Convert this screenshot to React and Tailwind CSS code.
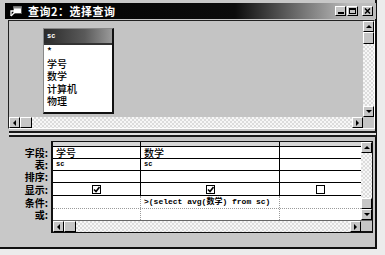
import React from 'react';

const checker = 'bg-[repeating-conic-gradient(#dcdcdc_0_25%,#f7f7f7_0_50%)] bg-[length:4px_4px]';
const raised = 'bg-[#c6c6c6] border-t border-l border-t-white border-l-white border-r border-b border-r-black border-b-black';
const cjk = "font-['Noto_Sans_CJK_SC','Noto_Sans',sans-serif]";
const mono = "font-['Liberation_Mono','Noto_Sans_CJK_SC',monospace]";

const Arrow = ({ dir }) => {
    const pts = {
        up: '1,5 4,2 7,5',
        down: '1,2 4,5 7,2',
        left: '5,1 2,4 5,7',
        right: '2,1 5,4 2,7',
    };
    return (
        <div className={`w-[11px] h-[11px] shrink-0 flex items-center justify-center ${raised}`}>
            <svg width="8" height="8" viewBox="0 0 8 8">
                <polygon points={pts[dir]} fill="#000" />
            </svg>
        </div>
    );
};

const VScroll = ({ thumbAtTop }) => (
    <div className="w-[11px] h-full flex flex-col">
        <Arrow dir="up" />
        {thumbAtTop && <div className={`h-[12px] shrink-0 ${raised}`} />}
        <div className={`flex-1 ${checker}`} />
        {!thumbAtTop && <div className={`h-[11px] shrink-0 ${raised}`} />}
        <Arrow dir="down" />
    </div>
);

const HScroll = () => (
    <div className="h-[11px] flex-1 flex">
        <Arrow dir="left" />
        <div className={`w-[12px] shrink-0 ${raised}`} />
        <div className={`flex-1 ${checker}`} />
        <Arrow dir="right" />
    </div>
);

const Check = ({ on }) => (
    <div className="w-[9px] h-[9px] border border-black bg-white flex items-center justify-center">
        {on && (
            <svg width="7" height="7" viewBox="0 0 7 7">
                <polyline points="1,3.5 3,5.5 6.5,1" fill="none" stroke="#000" strokeWidth="1.6" />
            </svg>
        )}
    </div>
);

const colW = ['w-[88px]', 'w-[139px]', 'flex-1'];

const Row = ({ h, line, cells, dotted }) => (
    <div className={`flex bg-white ${h} ${line}`}>
        {cells.map((c, i) => (
            <div
                key={i}
                className={`${colW[i]} flex items-center ${
                    i < 2 ? (dotted ? 'border-r border-dotted border-r-[#9a9a9a]' : 'border-r border-r-black') : ''
                }`}
            >
                {c}
            </div>
        ))}
    </div>
);

const labels = [
    ['字段:', 'h-[12px]'],
    ['表:', 'h-[12px]'],
    ['排序:', 'h-[12px]'],
    ['显示:', 'h-[13px]'],
    ['条件:', 'h-[13px]'],
    ['或:', 'h-[11px]'],
];

export default function App() {
    return (
        <div className={`w-[385px] h-[255px] bg-[#ececec] overflow-hidden ${cjk}`}>
            <div className="w-[377px] h-[249px] bg-[#c8c8c8] border-r-2 border-b-2 border-[#111] pt-[3px] pl-[5px] flex flex-col">
                {/* title bar */}
                <div className="w-[371px] h-[16px] shrink-0 flex items-center pl-[5px] pr-[3px] bg-[linear-gradient(90deg,#000_0%,#0c0c0c_62%,#8a8a8a_84%,#bdbdbd_93%)]">
                    <svg width="12" height="11" viewBox="0 0 12 11" className="shrink-0">
                        <rect x="3.5" y="0.5" width="8" height="7" fill="#fff" stroke="#555" />
                        <rect x="3.5" y="0.5" width="8" height="2" fill="#888" />
                        <path d="M1 10 L1 5 L5 5" fill="none" stroke="#fff" strokeWidth="1.3" />
                        <path d="M1 10 L5 6" stroke="#fff" strokeWidth="1.3" />
                    </svg>
                    <span className="ml-[6px] text-[11px] leading-none font-bold text-white tracking-[0.5px]">
                        查询2：选择查询
                    </span>
                    <div className="ml-auto flex items-center gap-[1px]">
                        <div className={`w-[11px] h-[10px] flex items-end justify-center pb-[1px] ${raised}`}>
                            <div className="w-[6px] h-[2px] bg-black" />
                        </div>
                        <div className={`w-[11px] h-[10px] flex items-center justify-center mr-[3px] ${raised}`}>
                            <div className="w-[7px] h-[6px] border border-t-2 border-black" />
                        </div>
                        <div className={`w-[11px] h-[10px] flex items-center justify-center ${raised}`}>
                            <svg width="7" height="6" viewBox="0 0 7 6">
                                <path d="M1 0.5 L6 5.5 M6 0.5 L1 5.5" stroke="#000" strokeWidth="1.5" />
                            </svg>
                        </div>
                    </div>
                </div>

                {/* top pane */}
                <div className="mt-[1px] ml-[3px] w-[367px] h-[109px] shrink-0 border-t border-l border-[#222] border-r border-b border-r-white border-b-white flex flex-col">
                    <div className="flex h-[96px]">
                        <div className="flex-1 bg-[#c4c4c4] pl-[34px] pt-[7px]">
                            <div className="w-[71px] h-[86px] bg-white border-t border-l border-[#888] border-r-2 border-b-2 border-r-[#111] border-b-[#111] flex flex-col">
                                <div className="h-[14px] shrink-0 bg-[linear-gradient(90deg,#2a2a2a,#5a5a5a_60%,#9a9a9a)] flex items-center px-[3px]">
                                    <span className={`text-[7px] leading-none font-bold text-white ${mono}`}>sc</span>
                                </div>
                                <div className="flex-1 border-t-2 border-[#333] pl-[3px] text-[10px] leading-[12.5px] font-medium text-black">
                                    <div>*</div>
                                    <div>学号</div>
                                    <div>数学</div>
                                    <div>计算机</div>
                                    <div>物理</div>
                                </div>
                            </div>
                        </div>
                        <VScroll thumbAtTop />
                    </div>
                    <div className="flex h-[11px]">
                        <HScroll />
                        <div className="w-[11px] bg-[#c6c6c6]" />
                    </div>
                </div>

                {/* splitter */}
                <div className="mt-[2px] ml-[4px] w-[367px] h-[6px] shrink-0 border-y-2 border-[#1a1a1a] bg-[#e2e2e2]" />

                {/* bottom pane */}
                <div className="mt-[4px] flex">
                    <div className="w-[46px] shrink-0 flex flex-col pt-[6px] pr-[3px] text-right text-[10px] leading-none font-bold text-black">
                        {labels.map(([t, h]) => (
                            <div key={t} className={`${h} flex items-center justify-end`}>
                                {t}
                            </div>
                        ))}
                    </div>
                    <div className="w-[322px] h-[92px] border-t border-l-2 border-b-2 border-r border-[#111] flex flex-col">
                        <div className="flex h-[78px]">
                            <div className="flex-1 flex flex-col text-black">
                                <div className="h-[5px] flex bg-[#d6d6d6] border-b border-black">
                                    <div className="w-[88px] border-r border-black" />
                                    <div className="w-[139px] border-r border-black" />
                                    <div className="flex-1" />
                                </div>
                                <Row
                                    h="h-[12px]"
                                    line="border-b border-black"
                                    cells={[
                                        <span className="pl-[3px] text-[10px] leading-none font-medium">学号</span>,
                                        <span className="pl-[3px] text-[10px] leading-none font-medium">数学</span>,
                                        null,
                                    ]}
                                />
                                <Row
                                    h="h-[12px]"
                                    line="border-b border-black"
                                    cells={[
                                        <span className={`pl-[3px] text-[7px] leading-none font-bold ${mono}`}>sc</span>,
                                        <span className={`pl-[3px] text-[7px] leading-none font-bold ${mono}`}>sc</span>,
                                        null,
                                    ]}
                                />
                                <Row h="h-[12px]" line="border-b border-black" cells={[null, null, null]} />
                                <Row
                                    h="h-[13px]"
                                    line="border-b border-black"
                                    cells={[
                                        <div className="w-full flex justify-center"><Check on /></div>,
                                        <div className="w-full flex justify-center"><Check on /></div>,
                                        <div className="w-full flex justify-center"><Check /></div>,
                                    ]}
                                />
                                <Row
                                    h="h-[13px]"
                                    dotted
                                    line="border-b border-dotted border-b-[#9a9a9a]"
                                    cells={[
                                        null,
                                        <span className={`pl-[3px] text-[8px] leading-none font-bold whitespace-nowrap ${mono}`}>
                                            &gt;(select avg(数学) from sc)
                                        </span>,
                                        null,
                                    ]}
                                />
                                <Row h="flex-1" dotted line="" cells={[null, null, null]} />
                            </div>
                            <VScroll />
                        </div>
                        <div className="flex h-[11px] border-t border-[#666]">
                            <HScroll />
                            <div className="w-[11px] bg-[#c6c6c6]" />
                        </div>
                    </div>
                </div>
            </div>
        </div>
    );
}
